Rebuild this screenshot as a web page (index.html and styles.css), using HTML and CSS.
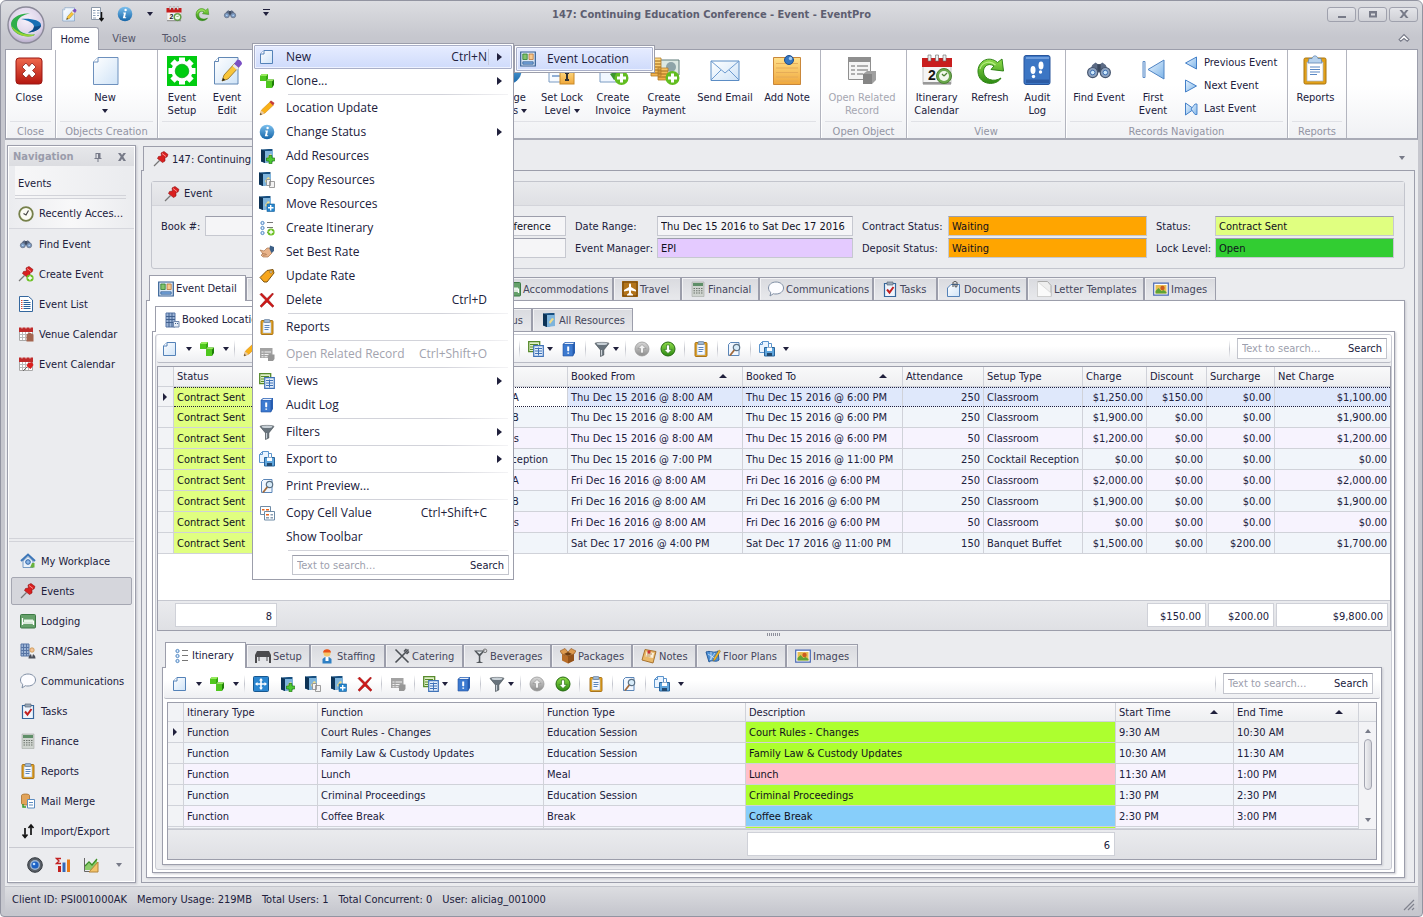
FILE: index.html
```html
<!DOCTYPE html>
<html lang="en">
<head>
<meta charset="utf-8">
<title>147: Continuing Education Conference - Event - EventPro</title>
<link rel="stylesheet" href="styles.css">
</head>
<body>
<svg class="sprite" aria-hidden="true">
<defs>
<linearGradient id="gPage" x1="0" y1="0" x2="1" y2="1"><stop offset="0" stop-color="#fff"/><stop offset="1" stop-color="#cfe3f7"/></linearGradient>
<linearGradient id="gBlue" x1="0" y1="0" x2="0" y2="1"><stop offset="0" stop-color="#7cc0ee"/><stop offset="1" stop-color="#1565a8"/></linearGradient>
<linearGradient id="gGreen" x1="0" y1="0" x2="0" y2="1"><stop offset="0" stop-color="#8fdc4a"/><stop offset="1" stop-color="#2c8a12"/></linearGradient>
<linearGradient id="gRed" x1="0" y1="0" x2="0" y2="1"><stop offset="0" stop-color="#ef6a4e"/><stop offset="1" stop-color="#b4160f"/></linearGradient>
<linearGradient id="gGold" x1="0" y1="0" x2="0" y2="1"><stop offset="0" stop-color="#ffe08a"/><stop offset="1" stop-color="#f0a83c"/></linearGradient>
<linearGradient id="gTri" x1="0" y1="0" x2="1" y2="1"><stop offset="0" stop-color="#eaf5ff"/><stop offset="1" stop-color="#7db4e8"/></linearGradient>
<linearGradient id="gGray" x1="0" y1="0" x2="0" y2="1"><stop offset="0" stop-color="#d8d8d8"/><stop offset="1" stop-color="#8d8d8d"/></linearGradient>
<radialGradient id="gOrb" cx=".5" cy=".35" r=".65"><stop offset="0" stop-color="#f6f0fa"/><stop offset=".75" stop-color="#d9cfe6"/><stop offset="1" stop-color="#b5abc8"/></radialGradient>
</defs>
<symbol id="orb" viewBox="0 0 38 38"><circle cx="19" cy="19" r="18" fill="url(#gOrb)" stroke="#8b8a99" stroke-width="1.400"/><path d="M23 7.500C12 6.500 4 12.500 4 18c0 6 6 12 17 12.500 4 0 6-1 7-2-11 1-19-4-18-11C10.500 12 16 8.500 23 7.500z" fill="#2fae4b"/><path d="M4.500 20c2 6 8 10 16.500 10.500 4 0 6-1 7-2-8 1-17-1-23.500-8.500z" fill="#9ad236"/><path d="M14 13c9-1 20 1 20 6 0 4-6 7-13 7.500 4-1.500 6-3.500 6-6 0-3.500-6-6-13-7.500z" fill="#176fb4"/><path d="M27 20.500c0 2.500-2 4.500-6 6 7-.5 13-3.500 13-7.500-2 1-4 1.500-7 1.500z" fill="#0c4a86"/></symbol>
<symbol id="page" viewBox="0 0 16 16"><path d="M5 1.500h8.500v13h-12V5z" fill="url(#gPage)" stroke="#5482b8"/><path d="M1.500 5H5V1.500" fill="#fff" stroke="#5482b8"/></symbol>
<symbol id="cubes" viewBox="0 0 16 16"><path d="M1 3l2-2h6v5L7.500 8H1z" fill="#37a80f"/><path d="M1 3l2-2h6L7.500 3z" fill="#96ea5c"/><path d="M1 3h6v5H1z" fill="#4fc81e"/><path d="M7 8.500L9 6.500h6v5.500l-2 3H7z" fill="#1f7d08"/><path d="M7 8.500l2-2h6l-2 2z" fill="#96ea5c"/><path d="M7 8.500h6V15H7z" fill="#4fc81e"/></symbol>
<symbol id="pencil" viewBox="0 0 16 16"><path d="M1 15l1.500-5L11 2l3.500 3L6 13z" fill="#f9b117" stroke="#d98a10" stroke-width=".6"/><path d="M10.500 2L12 .5 15.500 3 14 5.500z" fill="#c43c3c"/><path d="M1 15l1.300-4.500 3.200 2.700z" fill="#e8c9a0"/><path d="M1 15l.5-2 1.500 1.300z" fill="#333"/></symbol>
<symbol id="info" viewBox="0 0 16 16"><circle cx="8" cy="8" r="7.300" fill="url(#gBlue)"/><circle cx="8.600" cy="4" r="1.200" fill="#fff"/><path d="M6.300 6.500H9L8 11.300h1.300l-.3.900H5.800L7 7.400h-.9z" fill="#fff"/></symbol>
<symbol id="book" viewBox="0 0 16 16"><path d="M2 1.500l8-.5h3.500v12L6 15l-4-1.500z" fill="#174f80"/><path d="M6 3h8v11l-8 1z" fill="#7eb4dc"/><path d="M2 1.500L6 3v12l-4-1.700z" fill="#0d3356"/><path d="M8 10l3-4 2 1-4 5z" fill="#f0dd8a"/></symbol>
<symbol id="resadd" viewBox="0 0 16 16"><use href="#book"/><path d="M10 7.500h3V10h2.700v3H13v2.700h-3V13H7.500v-3H10z" fill="#4cc832" stroke="#237a15" stroke-width=".7"/></symbol>
<symbol id="rescopy" viewBox="0 0 16 16"><use href="#book" x="-2" y="-1"/><path d="M7.500 7.500h4v6h-4zM10.500 9.500h5v6h-5z" fill="#f3f3f3" stroke="#888" stroke-width=".8"/></symbol>
<symbol id="resmove" viewBox="0 0 16 16"><use href="#book" x="-2" y="-1"/><rect x="8" y="8" width="7.500" height="7.500" fill="#2486cf" stroke="#155a94" stroke-width=".6"/><path d="M11.700 9v5.500M9 11.700h5.500" stroke="#fff" stroke-width="1.400"/></symbol>
<symbol id="itin" viewBox="0 0 16 16"><g fill="#dcecff" stroke="#4f86c0"><circle cx="3.500" cy="3" r="1.600"/><circle cx="3.500" cy="8" r="1.600"/><circle cx="3.500" cy="13" r="1.600"/></g><path d="M8 2.500h6M8 7.500h6M8 12.500h6" stroke="#777"/></symbol>
<symbol id="itinadd" viewBox="0 0 16 16"><use href="#itin"/><circle cx="12" cy="12" r="3.600" fill="#6cc022"/><path d="M12 9.800v4.400M9.800 12h4.400" stroke="#fff" stroke-width="1.300"/></symbol>
<symbol id="hand" viewBox="0 0 16 16"><path d="M1 6l4 1 3-3h4l1 5-4 4H4L2 11l2-1z" fill="#e9b48b" stroke="#a9744e" stroke-width=".7"/><path d="M3 9.500l4 .5M4 11.500l4-1" stroke="#a9744e" stroke-width=".7"/><path d="M11 1.500l4 1.500v4l-2.500 2-2-4z" fill="#3c5f86"/></symbol>
<symbol id="tag" viewBox="0 0 16 16"><path d="M1 9.500L8 2.500l6-1 1 3.500-7 9H5z" fill="#f7a61c" stroke="#7d5410"/><circle cx="12" cy="4" r="1.200" fill="#fff" stroke="#7d5410" stroke-width=".7"/></symbol>
<symbol id="cross" viewBox="0 0 16 16"><path d="M1 2.500L2.500 1 8 6.500 13.500 1l1 1L9.500 8l5.500 6-1.500 1.300L8 10l-5.500 5.300L1 14l5.500-6z" fill="#cf1717" stroke="#8c0f0f" stroke-width=".5"/></symbol>
<symbol id="clip" viewBox="0 0 16 16"><rect x="2" y="1.500" width="12" height="14" rx="1" fill="#e9a51d" stroke="#a06a11" stroke-width=".9"/><path d="M4 3.500h8V14H4z" fill="#f5f9ff" stroke="#8ba3c4" stroke-width=".5"/><path d="M5.500 6.500h5M5.500 8.500h5M5.500 10.500h4" stroke="#4a78b5" stroke-width=".9"/><rect x="5" y=".5" width="6" height="3" rx="1" fill="#9fb8d4" stroke="#5b7696" stroke-width=".6"/></symbol>
<symbol id="openrel" viewBox="0 0 16 16"><path d="M1 2h12.500v10H1z" fill="#a3a3a3"/><path d="M2.500 5.500h2v1h-2zM5.500 5.500h6.500v1H5.500zM2.500 8h2v1h-2zM5.500 8h4v1h-4zM2.500 10.300h2v1h-2zM5.500 10.300h3v1h-3z" fill="#f2f2f2"/><path d="M9 10l1.500-1.500h5V13L14 15H9z" fill="#969696"/></symbol>
<symbol id="views" viewBox="0 0 16 16"><path d="M.7.700h11v10H.7z" fill="#dff0c8" stroke="#578a2c" stroke-width="1.300"/><path d="M2 3.500h8M2 6h3M2 8.500h3" stroke="#578a2c"/><path d="M5.700 4.700h9.600v10.600H5.700z" fill="#e3eefb" stroke="#3f72b8" stroke-width="1.200"/><path d="M7 7.500h7M7 10h7M7 12.500h7M10.500 6.500v8" stroke="#3f72b8"/></symbol>
<symbol id="log" viewBox="0 0 16 16"><path d="M2 3l2-2h10v11l-2 3H2z" fill="#2860b4"/><path d="M2 3h10v12H2z" fill="#3c7ad0" stroke="#2453a0" stroke-width=".6"/><path d="M3 3l1.500-1.300H13L12 3z" fill="#e8effa"/><path d="M6.200 5.500h2v4.200l-1 .8-1-.8zM6.400 11.500h1.700v1.300H6.400z" fill="#fff"/></symbol>
<symbol id="funnel" viewBox="0 0 16 16"><path d="M1 2.500C1 1 15 1 15 2.500L9.800 9v5L6.500 15.500V9z" fill="#68737c" stroke="#3c454c" stroke-width=".6"/><ellipse cx="8" cy="2.800" rx="5.500" ry="1.200" fill="#c8d0d6"/><path d="M7.600 9v5.500" stroke="#d5dbe0"/></symbol>
<symbol id="export" viewBox="0 0 16 16"><path d="M3.500.500h6v11h-9v-8z" fill="#eaf4ff" stroke="#5c94cc"/><path d="M.5 3.500h3v-3M9.500 2.500h3v4" fill="none" stroke="#5c94cc"/><path d="M5.500 6.500h10v8.500h-10z" fill="#5fa5dc" stroke="#28649c"/><path d="M8 6.500h5V10H8z" fill="#fff"/><path d="M8 12h5v3H8z" fill="#234a70"/></symbol>
<symbol id="preview" viewBox="0 0 16 16"><path d="M4.500 1.500h8.500v13H2.500v-11z" fill="#f1f7ff" stroke="#5b86b8"/><circle cx="10.500" cy="6.500" r="3.200" fill="#d8ecfa" stroke="#5c7184" stroke-width="1.200"/><path d="M8.300 9L4 14.500" stroke="#a36b3c" stroke-width="1.800"/></symbol>
<symbol id="copycell" viewBox="0 0 16 16"><path d="M1.500 1.500h10v8h-10z" fill="#fff" stroke="#6e8ba6"/><path d="M3 4h2.500v1.500H3zM7 4h3v1.500H7z" fill="#e8641b"/><path d="M5.500 6.500h10v8.500h-10z" fill="#fff" stroke="#6e8ba6"/><path d="M7 9h3v1.500H7z" fill="#e8641b"/><path d="M11.500 9h2.500v1.500h-2.500zM7 12h3v1.500H7zM11.500 12h2.500v1.500h-2.500z" fill="#8a9eb2"/></symbol>
<symbol id="evloc" viewBox="0 0 16 16"><path d="M.7 1h14.600v14H.7z" fill="#dce9f7" stroke="#345f94" stroke-width="1.200"/><path d="M2.800 3h4.400v5.500H2.800z" fill="#83c36c" stroke="#2d7c2c" stroke-width=".8"/><path d="M9 3h4.200v5.500H9z" fill="#f8c98c" stroke="#b9743a" stroke-width=".8"/><path d="M2.800 10.800h10.400v2.400H2.800z" fill="#7aa9e0" stroke="#345f94" stroke-width=".8"/></symbol>
<symbol id="pagepen" viewBox="0 0 32 32"><path d="M7.500 3.500H27v26.500H3.500V7.500z" fill="url(#gPage)" stroke="#6288b5"/><path d="M3.500 7.500h4v-4" fill="#fff" stroke="#6288b5"/><path d="M11 27l2-6 11-12 4 4-11 12z" fill="#f8c53a" stroke="#8c6a20" stroke-width=".8"/><path d="M23 10l4.500 4L31 10c0-3-3-5-5-4z" fill="#7a4fc4"/><path d="M21.500 12l1.800-2 4.500 4-1.800 2z" fill="#e6e6ee"/><path d="M11 27l1-3 2.300 2z" fill="#222"/></symbol>
<symbol id="pagelist" viewBox="0 0 16 16"><path d="M2.500 1.500h9v12h-9z" fill="#fff" stroke="#8c98a8"/><path d="M4 4.500h2.500M8 4.500h2.500M4 7h2.500M8 7h2.500M4 9.500h2.500M8 9.500h2M4 12h3" stroke="#8da0b8"/><path d="M12.500 6v8M10.500 12l2 2.500 2-2.500" fill="none" stroke="#111" stroke-width="1.500"/></symbol>
<symbol id="calbig" viewBox="0 0 32 32"><path d="M2 6h28v24H2z" fill="#f4f4f4" stroke="#c5c5c5"/><path d="M1 4h30v9H1z" fill="#c81e1e"/><path d="M7 1h3v6H7zM14.500 1h3v6h-3zM22 1h3v6h-3z" fill="#eee" stroke="#666" stroke-width=".6"/><path d="M2 28h28v2.500H2z" fill="#999"/><text x="7" y="25.500" font-family="Liberation Sans, sans-serif" font-size="14" font-weight="700" fill="#151515">2</text><circle cx="23" cy="22" r="7.500" fill="#6aa84c" stroke="#4b8233"/><circle cx="23" cy="22" r="5" fill="#f1f8ec"/><path d="M23 22l3-3M23 22l-2-2" stroke="#4b8233" stroke-width="1.300"/></symbol>
<symbol id="refresh" viewBox="0 0 32 32"><path d="M27 24c-4 8-22 8-23-6C3.500 7 15 1 23.500 8.500L28 5l1.500 12-12.500-1.500 3-3.500C14 8 9 13 9.500 18c.5 7 10 11 17.500 6z" fill="url(#gGreen)" stroke="#2f8416"/><path d="M6 15c2-7 10-9 15.500-4" fill="none" stroke="#b8ee86" stroke-width="1.200"/></symbol>
<symbol id="binoc" viewBox="-3 -3 38 38"><path d="M8 10l4-3 4 3 4-3 4 3 4 9H4z" fill="#5c6b85"/><path d="M14 9h4v9h-4z" fill="#3a475c"/><circle cx="8.500" cy="19" r="6" fill="#8ea3c0" stroke="#46556e" stroke-width="1.400"/><circle cx="23.500" cy="19" r="6" fill="#8ea3c0" stroke="#46556e" stroke-width="1.400"/><circle cx="8.500" cy="19" r="2.700" fill="#cfeafc" stroke="#2b5fa8"/><circle cx="23.500" cy="19" r="2.700" fill="#cfeafc" stroke="#2b5fa8"/></symbol>
<symbol id="closebig" viewBox="0 0 32 32"><rect x="3" y="4" width="26" height="26" rx="3" fill="url(#gRed)" stroke="#9a1712"/><path d="M9 13l4-4 3 3.500L19 9l4 4-3.500 3.500L23 20l-4 4-3-3.500-3 3.500-4-4 3.500-3.500z" fill="#fff" stroke="#7c120d" stroke-width=".7"/></symbol>
<symbol id="pagebig" viewBox="0 0 32 32"><path d="M9 3.500h20v27H4.500V8z" fill="url(#gPage)" stroke="#6d90bd"/><path d="M4.500 8H9V3.500" fill="#fff" stroke="#6d90bd"/></symbol>
<symbol id="gear" viewBox="0 0 32 32"><path d="M1 2h30v30H1z" fill="#00cc10"/><g fill="#fff"><circle cx="16" cy="17" r="10.500"/><path d="M13 3.500h6v5h-6zM13 25.500h6v5h-6zM2.500 14h5v6h-5zM24.500 14h5v6h-5z"/><path d="M13 3.500h6v5h-6zM13 25.500h6v5h-6zM2.500 14h5v6h-5zM24.500 14h5v6h-5z" transform="rotate(45 16 17)"/></g><circle cx="16" cy="17" r="6.800" fill="#00cc10" stroke="#0a9a14" stroke-width=".7"/></symbol>
<symbol id="lock" viewBox="0 0 32 32"><path d="M3 3h22v25H3z" fill="#f6faff" stroke="#7b9bc2"/><path d="M6 10h12M6 14h9M6 18h9M6 22h8" stroke="#6f95c6" stroke-width="1.500"/><path d="M18 15v-3c0-5 8-5 8 0v3" fill="none" stroke="#999" stroke-width="2"/><rect x="14" y="15" width="14" height="15" fill="url(#gGold)" stroke="#c98a28"/><path d="M19 18h4v2h-1v5h1v2h-4v-2h1v-5h-1z" fill="#333"/></symbol>
<symbol id="invoice" viewBox="0 0 32 32"><path d="M3 3h22v25H3z" fill="#f1f7ff" stroke="#7b9bc2"/><path d="M13 20l8-4 2 7-6 3z" fill="#3e9430"/><circle cx="24.500" cy="24" r="7" fill="#62bd20"/><path d="M24.500 19.500v9M20 24h9" stroke="#fff" stroke-width="3"/></symbol>
<symbol id="payment" viewBox="0 0 32 32"><path d="M12 6h19v15H12z" fill="#dce8e2" stroke="#5e7a78"/><circle cx="23" cy="13" r="5" fill="#8ea4a8"/><g fill="url(#gGold)" stroke="#b37b2a" stroke-width=".8"><path d="M3 4h10v3H3zM3 7h10v3H3zM3 10h10v3H3zM3 13h10v3H3zM3 16h10v3H3zM3 19h10v3H3zM10 14h10v3H10zM10 17h10v3H10zM10 20h10v3H10zM10 23h10v3H10z"/></g><circle cx="24.500" cy="24" r="7" fill="#62bd20"/><path d="M24.500 19.500v9M20 24h9" stroke="#fff" stroke-width="3"/></symbol>
<symbol id="mail" viewBox="0 0 32 32"><path d="M2 7h28v19.500H2z" fill="url(#gPage)" stroke="#5b8cc4"/><path d="M2 7l14 12L30 7M2 26l10-10M30 26L20 16" fill="none" stroke="#6d9bd0"/></symbol>
<symbol id="note" viewBox="0 0 32 32"><path d="M2.500 3.500h27v27h-27z" fill="url(#gGold)" stroke="#c9873a"/><path d="M5 9.500h22M5 14h22M5 18.500h22M5 23h22M5 27h22" stroke="#e3a957" stroke-width=".9"/><circle cx="18" cy="6" r="4.500" fill="#3576c0" stroke="#1d4d8c"/><circle cx="19.500" cy="4.500" r="1.700" fill="#9fc8ef"/></symbol>
<symbol id="openrelbig" viewBox="0 0 32 32"><path d="M2.500 3.500h22v22h-22z" fill="#f4f4f4" stroke="#8f8f8f"/><path d="M2 3h23v5H2z" fill="#8f8f8f"/><path d="M5 12h4M11 12h11M5 16h4M11 16h11M5 20h4M11 20h6" stroke="#969696" stroke-width="1.600"/><path d="M17 20l4-3h9v9l-4 4h-9z" fill="#a0a0a0"/><path d="M17 20h9v10h-9z" fill="#858585"/></symbol>
<symbol id="audit" viewBox="0 0 32 32"><rect x="3" y="1.500" width="26" height="29" rx="2" fill="#3c76c4" stroke="#28559c"/><path d="M5 25.500h23V29H5z" fill="#2c5ba4"/><path d="M5 4h23" stroke="#7fabe4" stroke-width="1.500"/><g fill="#fff"><ellipse cx="12" cy="16" rx="2.500" ry="4"/><ellipse cx="12.500" cy="22.500" rx="1.700" ry="1.800"/><ellipse cx="20" cy="11.500" rx="2.500" ry="4"/><ellipse cx="19.500" cy="18" rx="1.700" ry="1.800"/></g></symbol>
<symbol id="firstbig" viewBox="0 0 32 32"><path d="M6 7.500h2v16H6z" fill="#dbe9f8" stroke="#5f8ec8"/><path d="M27 6v19L11 15.500z" fill="url(#gTri)" stroke="#4f84c4"/></symbol>
<symbol id="prev" viewBox="0 0 16 16"><path d="M13.500 2v12L2.500 8z" fill="url(#gTri)" stroke="#4480c8"/></symbol>
<symbol id="next" viewBox="0 0 16 16"><path d="M2.500 2v12l11-6z" fill="url(#gTri)" stroke="#4480c8"/></symbol>
<symbol id="last" viewBox="0 0 16 16"><path d="M2.500 2v12L11 8z" fill="url(#gTri)" stroke="#4480c8"/><path d="M12 3h2v10.500h-2L8 8z" fill="url(#gTri)" stroke="#4480c8" stroke-width=".9"/></symbol>
<symbol id="clipbig" viewBox="0 0 32 32"><rect x="5" y="4" width="22" height="26" rx="1.500" fill="#e2a019" stroke="#a87410"/><path d="M8 8h16v19H8z" fill="#fff" stroke="#a6b6cc" stroke-width=".7"/><path d="M11 13h10M11 15.500h10M11 18h10M11 20.500h7" stroke="#5a88c4" stroke-width="1.100"/><path d="M10 4.500h3C14 1 18 1 19 4.500h3l1 4.500H9z" fill="#b6d2ee" stroke="#5c81ad" stroke-width=".8"/></symbol>
<symbol id="pin" viewBox="0 0 16 16"><path d="M1 15l5.500-5.500" stroke="#777" stroke-width="1.300"/><path d="M8 2l3-1.500 4 3-1 2.500-2 .5 0 3.500-2.500 1.500-5-4 1-2 3-.5z" fill="#d91f1f" stroke="#8e1010" stroke-width=".6"/><path d="M9 2.500l4 3" stroke="#ff8d8d"/></symbol>
<symbol id="pinadd" viewBox="0 0 16 16"><use href="#pin"/><circle cx="12" cy="12" r="3.600" fill="#6cc022"/><path d="M12 9.800v4.400M9.800 12h4.400" stroke="#fff" stroke-width="1.300"/></symbol>
<symbol id="clock" viewBox="0 0 16 16"><circle cx="8" cy="8" r="6.800" fill="#fbfbf3" stroke="#76804a" stroke-width="1.800"/><path d="M5.500 7.500L8 9l2.500-4.500" fill="none" stroke="#444" stroke-width="1.200"/></symbol>
<symbol id="list" viewBox="0 0 16 16"><path d="M1.500.500h9l4 3.500v11.500h-13z" fill="#fff" stroke="#34679e"/><path d="M3 4.500h1.500M3 6.500h1.500M3 8.500h1.500M3 10.500h1.500M3 12.500h1.500" stroke="#d43"/><path d="M5.500 4.500h5M5.500 6.500h7M5.500 8.500h7M5.500 10.500h7M5.500 12.500h7" stroke="#2a5f9c"/></symbol>
<symbol id="calred" viewBox="0 0 16 16"><path d="M1.500 3.500h13v11h-13z" fill="#fff" stroke="#aaa"/><path d="M1 1.500h14V6H1z" fill="#bf2a2a"/><path d="M3.500.500h1v2h-1zM7.500.500h1v2h-1zM11.500.500h1v2h-1z" fill="#eee"/><path d="M2 8.500h12M2 11.500h12M4.500 6v8M7.500 6v8M10.500 6v8" stroke="#bbb"/></symbol>
<symbol id="calven" viewBox="0 0 16 16"><use href="#calred"/><path d="M8.500 8.500l3-2 4 2v7h-7z" fill="#a3644f"/></symbol>
<symbol id="calev" viewBox="0 0 16 16"><use href="#calred"/><path d="M5 15l4-4" stroke="#666"/><path d="M10 7l4-1 1.500 3-3 4-4-3z" fill="#d91f1f"/></symbol>
<symbol id="home" viewBox="0 0 16 16"><path d="M1 8l7-6.500L15 8" fill="none" stroke="#3c76b8" stroke-width="2"/><path d="M3 8l5-4.500L13 8v6.500H3z" fill="#eaf2fb" stroke="#5a86b8" stroke-width=".8"/><circle cx="8" cy="9" r="2.300" fill="#8db8e8" stroke="#2f62a4"/><path d="M12 10h2.500v4.500H10z" fill="#69b23c"/></symbol>
<symbol id="bed" viewBox="0 0 16 16"><rect x=".5" y="1.500" width="15" height="13.500" rx="1" fill="#65a06a" stroke="#3d7a45"/><path d="M2.500 5v7M2.500 10h11M13.500 7.500V12" stroke="#fff" stroke-width="1.300"/><path d="M4 6.500h9v2.500H4z" fill="#e8f5e8"/></symbol>
<symbol id="building" viewBox="0 0 16 16"><path d="M2 1h9v14H2z" fill="#9cb4d6" stroke="#5674a4"/><path d="M2 4.500h9M2 7.500h9M2 10.500h9M5 1v14M8 1v14" stroke="#41608f"/><path d="M9.500 9.500h5.500V15H9.500z" fill="#e5edf7" stroke="#7188ac"/><path d="M11 11.500h1M13 11.500h1" stroke="#41608f"/></symbol>
<symbol id="crm" viewBox="0 0 16 16"><path d="M1 1h8v12H1z" fill="#9cb4d6" stroke="#5674a4"/><path d="M1 4.500h8M1 7.500h8M1 10.500h8M3.500 1v12M6.500 1v12" stroke="#5674a4"/><circle cx="12" cy="7" r="2.200" fill="#f2c49a" stroke="#c68a3a" stroke-width=".7"/><path d="M8.500 15.500c0-6 7-6 7 0z" fill="#4a4f5a"/><path d="M11 10.500h2l-1 4z" fill="#fff"/></symbol>
<symbol id="bubble" viewBox="0 0 16 16"><path d="M8 1c4.500 0 7.500 2.800 7.500 6S12.500 13 8 13c-1 0-2 0-2.600-.3L2 15l.8-3.500C1.500 10.500.500 9 .5 7 .5 3.800 3.500 1 8 1z" fill="#fcfcff" stroke="#7f8ea4"/></symbol>
<symbol id="tasks" viewBox="0 0 16 16"><path d="M2.500 2.500h11v13h-11z" fill="#eef5fd" stroke="#35669c" stroke-width="1.200"/><path d="M5 1h6v3H5z" fill="#9aa9b8" stroke="#5d6c7c" stroke-width=".7"/><path d="M5 8.500l2.500 3L11.500 6" fill="none" stroke="#c22020" stroke-width="2"/></symbol>
<symbol id="calc" viewBox="0 0 16 16"><path d="M2 1h12v14.500H2z" fill="#cfd4cf" stroke="#a5aaa5" stroke-width=".6"/><path d="M3 2h10v3H3z" fill="#5f8f68"/><path d="M3.500 7h1.500v1H3.500zM6 7h1.500v1H6zM8.500 7H10v1H8.500zM11 7h1.500v1H11zM3.500 9.300h1.500v1H3.500zM6 9.300h1.500v1H6zM8.500 9.300H10v1H8.500zM11 9.300h1.500v1H11zM3.500 11.600h1.500v1H3.500zM6 11.600h1.500v1H6zM8.500 11.600H10v1H8.500zM11 11.600h1.500v1H11z" fill="#6d736d"/></symbol>
<symbol id="merge" viewBox="0 0 16 16"><path d="M1.500 2.500c0-2 8-2 8 0v8c0 2-8 2-8 0z" fill="#e2a45a" stroke="#a56d2c" stroke-width=".8"/><path d="M7.500 6.500h7v8.500h-7z" fill="#fff" stroke="#5d8cc0"/><path d="M9 9.500h4M9 12h4" stroke="#5d8cc0"/><path d="M3 11v3h3" fill="none" stroke="#3b9a2c" stroke-width="1.500"/></symbol>
<symbol id="updown" viewBox="0 0 16 16"><path d="M5 5v9M2.500 11.500L5 14.500l2.500-3M11 12V2M8.500 5L11 2l2.500 3" fill="none" stroke="#151515" stroke-width="1.700"/></symbol>
<symbol id="camera" viewBox="0 0 16 16"><circle cx="8" cy="8" r="7.300" fill="#5a6068" stroke="#33383e"/><circle cx="8" cy="8" r="5" fill="#9ab3d0"/><circle cx="8" cy="8" r="3.600" fill="#1d62c4"/><circle cx="7" cy="7" r="1.300" fill="#bfe0ff"/></symbol>
<symbol id="sigma" viewBox="0 0 16 16"><path d="M6 1.500H1.500L4 4 1.500 6.500H6" fill="none" stroke="#c32020" stroke-width="1.300"/><path d="M3 9h3v6H3z" fill="#c32020"/><path d="M7.500 5.500h3V15h-3z" fill="#3468b8"/><path d="M12 2.500h3V15h-3z" fill="#e77b1a"/></symbol>
<symbol id="chart" viewBox="0 0 16 16"><path d="M1.500 1v13.500H9" fill="none" stroke="#666"/><path d="M2 13V9l4-3 3 2 5-6v11z" fill="#8ccc6a"/><path d="M2 9l4-4 3 3 5-6" fill="none" stroke="#3b8f25" stroke-width="1.300"/><path d="M15 5v10H6z" fill="#f3c36a" stroke="#b3843a"/></symbol>
<symbol id="plane" viewBox="0 0 16 16"><path d="M0 0h16v16H0z" fill="#b37419"/><path d="M1 1h14v14H1z" fill="none" stroke="#6d430b"/><path d="M8 2l1 1.500V6l5 3v1.500L9 9.500V12l2 1.500v1H5v-1L7 12V9.500l-5 1V9l5-3V3.500z" fill="#fff"/></symbol>
<symbol id="docclip" viewBox="0 0 16 16"><path d="M5 3.500h8.500v12h-12V7z" fill="url(#gPage)" stroke="#5482b8"/><path d="M7 6V2c0-2 4-2 4 0v3c0 1.500-2 1.500-2 0V2.500" fill="none" stroke="#333" stroke-width=".9"/></symbol>
<symbol id="letter" viewBox="0 0 16 16"><path d="M1.500.500h10l3.500 4v11h-13.500z" fill="#eee" stroke="#aaa"/><path d="M1.500.500L15 12v3.500H1.500z" fill="#fafafa" stroke="#ccc" stroke-width=".6"/></symbol>
<symbol id="image" viewBox="0 0 16 16"><path d="M.7 2.200h14.600v12H.7z" fill="#fff" stroke="#4a69b4" stroke-width="1.200"/><path d="M2.500 4h11v8.500h-11z" fill="#e8bd52"/><path d="M2.500 12.500V10l3-3 3 3 2-1 3 2v1.500z" fill="#5fa334"/><circle cx="9.500" cy="7" r="2.200" fill="#cc5c1e"/></symbol>
<symbol id="table" viewBox="0 0 16 16"><path d="M0 7l2-4h12l2 4v8h-2V9h-1.500v4h-1V9h-7v4h-1V9H2v6H0z" fill="#4b4b4e"/></symbol>
<symbol id="person" viewBox="0 0 16 16"><circle cx="8" cy="5" r="3.500" fill="#f5c66a"/><path d="M4 4.500C4 0 12 0 12 4.500z" fill="#e8521c"/><path d="M3.500 15.500V11l2.500-2h4l2.500 2v4.500z" fill="#2f80c4"/><path d="M6.500 9h3v4h-3z" fill="#fff"/></symbol>
<symbol id="fork" viewBox="0 0 16 16"><path d="M1.500 1.500l13 13M14.500 1.500l-13 13M10 3.500l2.500-2.500M12.500 6L15 3.500" stroke="#4d5156" stroke-width="1.600"/></symbol>
<symbol id="glass" viewBox="0 0 16 16"><path d="M2 2.500h11L8.300 8v5.500l3 1.500h-7.500l3-1.500V8z" fill="#50555a"/><path d="M4.500 3.500h6L7.500 6z" fill="#dfe6ea"/><circle cx="13" cy="2.800" r="1.800" fill="none" stroke="#777"/></symbol>
<symbol id="box" viewBox="0 0 16 16"><path d="M2 6l6 2 6-2v6.500L8 15.500 2 12.500z" fill="#b86d28"/><path d="M8 8v7.500l6-3V6z" fill="#94521a"/><path d="M2 6L0 3l5-2.500L8 4l3-3.500L16 3l-2 3-6 2z" fill="#dc9a50" stroke="#8a4f1c" stroke-width=".6"/><path d="M8 4L4 6l4 1.800L12 6z" fill="#6e3c12"/></symbol>
<symbol id="notes" viewBox="0 0 16 16"><path d="M4 1.500l11 2-3 11.500L1 12z" fill="#e9b96a" stroke="#a87330"/><path d="M5.500 3.500l7.500 1.500-1 5-7.500-1.500z" fill="#faf0dc"/><path d="M6 6h5M5.500 8h4" stroke="#b58a4a"/><circle cx="8" cy="4" r="1.700" fill="#c33"/></symbol>
<symbol id="floor" viewBox="0 0 16 16"><path d="M1 4c4-2 8 2 12-1l1 9c-4 3-6-1-10 2z" fill="#4c8fd4" stroke="#285c9a"/><path d="M3 6l8 5M10 5l-5 7M6 4v8" stroke="#d6e9fb" stroke-width=".8"/><path d="M8 13l1-3 5-8 1.500 1-5 8.500z" fill="#f5bb2c" stroke="#8d6b1e" stroke-width=".5"/></symbol>
<symbol id="up" viewBox="0 0 16 16"><circle cx="8" cy="8" r="7" fill="url(#gGray)" stroke="#999" stroke-width=".8"/><path d="M8 3.500l4 4H9.500V12h-3V7.500H4z" fill="#f2f2f2" stroke="#888" stroke-width=".6"/></symbol>
<symbol id="down" viewBox="0 0 16 16"><circle cx="8" cy="8" r="7" fill="url(#gGreen)" stroke="#24690f"/><path d="M8 12.500l-4-4h2.500V4h3v4.500H12z" fill="#fff" stroke="#24690f" stroke-width=".6"/></symbol>
<symbol id="move" viewBox="0 0 16 16"><rect x=".5" y=".5" width="15" height="15" rx="1" fill="#2b86d0" stroke="#17578f"/><path d="M8 2l2 2.500H8.800v2.700h2.700V6L14 8l-2.500 2V8.800H8.800v2.700H10L8 14l-2-2.500h1.200V8.800H4.500V10L2 8l2.500-2v1.200h2.700V4.500H6z" fill="#fff"/></symbol>
</svg>

<div class="window">
<header class="titlebar">
  <button class="orb" aria-label="Application menu"><svg><use href="#orb"/></svg></button>
  <div class="quick">
    <button aria-label="Edit"><svg class="i"><use href="#pagepen"/></svg></button>
    <button aria-label="List"><svg class="i"><use href="#pagelist"/></svg></button>
    <button aria-label="Info"><svg class="i"><use href="#info"/></svg></button>
    <button class="quick-caret" aria-label="Info options"><span class="caret"></span></button>
    <button aria-label="Calendar"><svg class="i"><use href="#calbig"/></svg></button>
    <button aria-label="Refresh"><svg class="i"><use href="#refresh"/></svg></button>
    <button aria-label="Find"><svg class="i"><use href="#binoc"/></svg></button>
    <button class="quick-more" aria-label="Customize"><span class="caret"></span></button>
  </div>
  <h1>147: Continuing Education Conference - Event - EventPro</h1>
  <div class="winbtns">
    <button aria-label="Minimize"><svg viewBox="0 0 12 10"><path d="M2 7h8v2H2z"/></svg></button>
    <button aria-label="Maximize"><svg viewBox="0 0 12 10"><path d="M2 2h8v6.500H2zM4 4.500v2h4v-2z" fill-rule="evenodd"/></svg></button>
    <button aria-label="Close window"><svg viewBox="0 0 12 10"><path d="M1.500 1h2.500l2 2.500L8 1h2.500L7.300 5l3.200 4H8L6 6.500 4 9H1.500l3.200-4z"/></svg></button>
  </div>
</header>
<nav class="ribbon-tabs">
  <button class="on">Home</button><button>View</button><button>Tools</button>
  <button class="collapse" aria-label="Collapse ribbon"><svg viewBox="0 0 12 10"><path d="M1.500 6L6 1.500 10.500 6 9 7.500 6 5 3 7.500z" fill="#fff" stroke="#777a88"/></svg></button>
</nav>
<section class="ribbon">
  <div class="rgroup g-close"><div class="rbody"><button class="big"><svg><use href="#closebig"/></svg>Close</button></div><p>Close</p></div>
  <div class="rgroup g-objects"><div class="rbody"><button class="big"><svg><use href="#pagebig"/></svg>New<br><span class="caret"></span></button></div><p>Objects Creation</p></div>
  <div class="rgroup g-actions"><div class="rbody">
    <button class="big b44"><svg><use href="#gear"/></svg>Event<br>Setup</button>
    <button class="big b46"><svg><use href="#pagepen"/></svg>Event<br>Edit</button>
    <span class="spring"></span>
    <button class="big b60"><svg><use href="#info"/></svg>Change<br>Status <span class="caret"></span></button>
    <button class="big b50"><svg><use href="#lock"/></svg>Set Lock<br>Level <span class="caret"></span></button>
    <button class="big b52"><svg><use href="#invoice"/></svg>Create<br>Invoice</button>
    <button class="big b50"><svg><use href="#payment"/></svg>Create<br>Payment</button>
    <button class="big b72"><svg><use href="#mail"/></svg>Send Email</button>
    <button class="big b52"><svg><use href="#note"/></svg>Add Note</button>
  </div><p></p></div>
  <div class="rgroup g-open"><div class="rbody"><button class="big" disabled><svg><use href="#openrelbig"/></svg>Open Related<br>Record</button></div><p>Open Object</p></div>
  <div class="rgroup g-view"><div class="rbody">
    <button class="big b60"><svg><use href="#calbig"/></svg>Itinerary<br>Calendar</button>
    <button class="big b48"><svg><use href="#refresh"/></svg>Refresh</button>
    <button class="big b48"><svg><use href="#audit"/></svg>Audit<br>Log</button>
  </div><p>View</p></div>
  <div class="rgroup g-records"><div class="rbody">
    <button class="big b66"><svg><use href="#binoc"/></svg>Find Event</button>
    <button class="big b42"><svg><use href="#firstbig"/></svg>First<br>Event</button>
    <div class="smalls"><button><svg class="i"><use href="#prev"/></svg>Previous Event</button><button><svg class="i"><use href="#next"/></svg>Next Event</button><button><svg class="i"><use href="#last"/></svg>Last Event</button></div>
  </div><p>Records Navigation</p></div>
  <div class="rgroup g-reports"><div class="rbody"><button class="big"><svg><use href="#clipbig"/></svg>Reports</button></div><p>Reports</p></div>
</section>

<div class="work">
<aside class="nav">
  <div class="nav-head"><b>Navigation</b>
    <button aria-label="Pin panel"><svg viewBox="0 0 12 12"><path d="M3.500 2h5v5h1v1H6.500v3h-1V8h-3V7h1zm1 1v4H6V3z" fill="#777a88" fill-rule="evenodd"/></svg></button>
    <button aria-label="Close panel"><svg viewBox="0 0 12 12"><path d="M2 2h2.500L6 4l1.500-2H10L7.300 5.800 10 10H7.500L6 7.700 4.500 10H2l2.700-4.200z" fill="#777a88"/></svg></button></div>
  <h2>Events</h2>
  <div class="nav-links">
    <a href="#" class="lit"><svg class="i"><use href="#clock"/></svg>Recently Acces...</a>
    <a href="#"><svg class="i"><use href="#binoc"/></svg>Find Event</a>
    <a href="#"><svg class="i"><use href="#pinadd"/></svg>Create Event</a>
    <a href="#"><svg class="i"><use href="#list"/></svg>Event List</a>
    <a href="#"><svg class="i"><use href="#calven"/></svg>Venue Calendar</a>
    <a href="#"><svg class="i"><use href="#calev"/></svg>Event Calendar</a>
  </div>
  <div class="nav-groups">
    <a href="#"><svg class="i"><use href="#home"/></svg>My Workplace</a>
    <a href="#" class="on"><svg class="i"><use href="#pin"/></svg>Events</a>
    <a href="#"><svg class="i"><use href="#bed"/></svg>Lodging</a>
    <a href="#"><svg class="i"><use href="#crm"/></svg>CRM/Sales</a>
    <a href="#"><svg class="i"><use href="#bubble"/></svg>Communications</a>
    <a href="#"><svg class="i"><use href="#tasks"/></svg>Tasks</a>
    <a href="#"><svg class="i"><use href="#calc"/></svg>Finance</a>
    <a href="#"><svg class="i"><use href="#clip"/></svg>Reports</a>
    <a href="#"><svg class="i"><use href="#merge"/></svg>Mail Merge</a>
    <a href="#"><svg class="i"><use href="#updown"/></svg>Import/Export</a>
  </div>
  <div class="nav-foot">
    <button aria-label="Camera"><svg class="i"><use href="#camera"/></svg></button>
    <button aria-label="Totals"><svg class="i"><use href="#sigma"/></svg></button>
    <button aria-label="Charts"><svg class="i"><use href="#chart"/></svg></button>
    <button aria-label="More"><span class="caret gray"></span></button>
  </div>
</aside>

<main>
<div class="doc-tabs"><button class="on"><svg class="i"><use href="#pin"/></svg>147: Continuing Education Conference</button><span class="caret gray"></span></div>
<div class="doc">
  <section class="group">
    <h3><svg class="i"><use href="#pin"/></svg>Event</h3>
    <div class="fields">
      <label for="f1">Book #:</label><input id="f1" readonly>
      <input id="f2" class="name" aria-label="Event name" readonly value="Continuing Education Conference">
      <label for="f3">Date Range:</label><input id="f3" readonly value="Thu Dec 15 2016 to Sat Dec 17 2016">
      <label for="f4">Contract Status:</label><input id="f4" class="orange" readonly value="Waiting">
      <label for="f5">Status:</label><input id="f5" class="lime" readonly value="Contract Sent">
      <input id="f6" class="name" aria-label="Account" readonly>
      <label for="f7">Event Manager:</label><input id="f7" class="violet" readonly value="EPI">
      <label for="f8">Deposit Status:</label><input id="f8" class="orange" readonly value="Waiting">
      <label for="f9">Lock Level:</label><input id="f9" class="green" readonly value="Open">
    </div>
  </section>

  <div class="tabs" role="tablist">
    <button role="tab" class="on w97"><svg class="i"><use href="#evloc"/></svg>Event Detail</button>
    <button role="tab" class="w250" aria-label="More details"></button>
    <button role="tab" class="w117"><svg class="i"><use href="#bed"/></svg>Accommodations</button>
    <button role="tab" class="w68"><svg class="i"><use href="#plane"/></svg>Travel</button>
    <button role="tab" class="w78"><svg class="i"><use href="#calc"/></svg>Financial</button>
    <button role="tab" class="w114"><svg class="i"><use href="#bubble"/></svg>Communications</button>
    <button role="tab" class="w64"><svg class="i"><use href="#tasks"/></svg>Tasks</button>
    <button role="tab" class="w90"><svg class="i"><use href="#docclip"/></svg>Documents</button>
    <button role="tab" class="w117"><svg class="i"><use href="#letter"/></svg>Letter Templates</button>
    <button role="tab" class="w72"><svg class="i"><use href="#image"/></svg>Images</button>
  </div>
  <div class="panel p1">
    <div class="tabs" role="tablist">
      <button role="tab" class="on w117"><svg class="i"><use href="#building"/></svg>Booked Locations</button>
      <button role="tab" class="w260 end">Venue Status</button>
      <button role="tab" class="w101"><svg class="i"><use href="#book"/></svg>All Resources</button>
    </div>
    <div class="panel p2"><div class="frame">
      <div class="toolbar">
        <button aria-label="New"><svg class="i"><use href="#page"/></svg></button><button class="drop" aria-label="New options"><span class="caret"></span></button>
        <button aria-label="Clone"><svg class="i"><use href="#cubes"/></svg></button><button class="drop" aria-label="Clone options"><span class="caret"></span></button>
        <hr><div class="run"><button aria-label="Location update"><svg class="i"><use href="#pencil"/></svg></button></div>
        <hr><button aria-label="Views"><svg class="i"><use href="#views"/></svg></button><button class="drop slim" aria-label="View options"><span class="caret"></span></button>
        <button aria-label="Audit log"><svg class="i"><use href="#log"/></svg></button>
        <hr><button aria-label="Filters"><svg class="i"><use href="#funnel"/></svg></button><button class="drop slim" aria-label="Filter options"><span class="caret"></span></button>
        <hr><button aria-label="Up"><svg class="i"><use href="#up"/></svg></button><button aria-label="Down"><svg class="i"><use href="#down"/></svg></button>
        <hr><button aria-label="Reports"><svg class="i"><use href="#clip"/></svg></button>
        <hr><button aria-label="Print preview"><svg class="i"><use href="#preview"/></svg></button>
        <hr><button aria-label="Export"><svg class="i"><use href="#export"/></svg></button><button class="drop" aria-label="Export options"><span class="caret"></span></button>
        <span class="spring"></span><hr>
        <div class="search"><input placeholder="Text to search..." aria-label="Text to search"><button>Search</button></div>
      </div>
      <div class="grid g1">
        <div class="rows"><table>
          <colgroup><col class="c-ind"><col class="c-stat"><col class="c-room"><col class="c-name"><col class="c-from"><col class="c-to"><col class="c-att"><col class="c-setup"><col class="c-chg"><col class="c-disc"><col class="c-sur"><col></colgroup>
          <thead><tr><th></th><th>Status</th><th></th><th></th><th>Booked From<i></i></th><th>Booked To<i></i></th><th>Attendance</th><th>Setup Type</th><th>Charge</th><th>Discount</th><th>Surcharge</th><th>Net Charge</th></tr></thead>
          <tbody>
          <tr class="focus"><td><span class="tri"></span></td><td>Contract Sent</td><td></td><td>Auditorium A</td><td>Thu Dec 15 2016 @ 8:00 AM</td><td>Thu Dec 15 2016 @ 6:00 PM</td><td>250</td><td>Classroom</td><td>$1,250.00</td><td>$150.00</td><td>$0.00</td><td>$1,100.00</td></tr>
          <tr><td></td><td>Contract Sent</td><td></td><td>Auditorium B</td><td>Thu Dec 15 2016 @ 8:00 AM</td><td>Thu Dec 15 2016 @ 6:00 PM</td><td>250</td><td>Classroom</td><td>$1,900.00</td><td>$0.00</td><td>$0.00</td><td>$1,900.00</td></tr>
          <tr><td></td><td>Contract Sent</td><td></td><td>Study Rooms</td><td>Thu Dec 15 2016 @ 8:00 AM</td><td>Thu Dec 15 2016 @ 6:00 PM</td><td>50</td><td>Classroom</td><td>$1,200.00</td><td>$0.00</td><td>$0.00</td><td>$1,200.00</td></tr>
          <tr><td></td><td>Contract Sent</td><td></td><td>Opening Reception</td><td>Thu Dec 15 2016 @ 7:00 PM</td><td>Thu Dec 15 2016 @ 11:00 PM</td><td>250</td><td>Cocktail Reception</td><td>$0.00</td><td>$0.00</td><td>$0.00</td><td>$0.00</td></tr>
          <tr><td></td><td>Contract Sent</td><td></td><td>Auditorium A</td><td>Fri Dec 16 2016 @ 8:00 AM</td><td>Fri Dec 16 2016 @ 6:00 PM</td><td>250</td><td>Classroom</td><td>$2,000.00</td><td>$0.00</td><td>$0.00</td><td>$2,000.00</td></tr>
          <tr><td></td><td>Contract Sent</td><td></td><td>Auditorium B</td><td>Fri Dec 16 2016 @ 8:00 AM</td><td>Fri Dec 16 2016 @ 6:00 PM</td><td>250</td><td>Classroom</td><td>$1,900.00</td><td>$0.00</td><td>$0.00</td><td>$1,900.00</td></tr>
          <tr><td></td><td>Contract Sent</td><td></td><td>Study Rooms</td><td>Fri Dec 16 2016 @ 8:00 AM</td><td>Fri Dec 16 2016 @ 6:00 PM</td><td>50</td><td>Classroom</td><td>$0.00</td><td>$0.00</td><td>$0.00</td><td>$0.00</td></tr>
          <tr><td></td><td>Contract Sent</td><td></td><td></td><td>Sat Dec 17 2016 @ 4:00 PM</td><td>Sat Dec 17 2016 @ 11:00 PM</td><td>150</td><td>Banquet Buffet</td><td>$1,500.00</td><td>$0.00</td><td>$200.00</td><td>$1,700.00</td></tr>
          </tbody>
        </table></div>
        <div class="foot"><output>8</output><output class="f-disc">$150.00</output><output>$200.00</output><output>$9,800.00</output></div>
      </div>
      <div class="splitter"><span></span></div>
      <div class="tabs low" role="tablist">
        <button role="tab" class="on w81"><svg class="i"><use href="#itin"/></svg>Itinerary</button>
        <button role="tab" class="w64"><svg class="i"><use href="#table"/></svg>Setup</button>
        <button role="tab" class="w75"><svg class="i"><use href="#person"/></svg>Staffing</button>
        <button role="tab" class="w78"><svg class="i"><use href="#fork"/></svg>Catering</button>
        <button role="tab" class="w88"><svg class="i"><use href="#glass"/></svg>Beverages</button>
        <button role="tab" class="w81"><svg class="i"><use href="#box"/></svg>Packages</button>
        <button role="tab" class="w64"><svg class="i"><use href="#notes"/></svg>Notes</button>
        <button role="tab" class="w90"><svg class="i"><use href="#floor"/></svg>Floor Plans</button>
        <button role="tab" class="w72"><svg class="i"><use href="#image"/></svg>Images</button>
      </div>
      <div class="panel p3">
        <div class="toolbar">
          <button aria-label="New"><svg class="i"><use href="#page"/></svg></button><button class="drop" aria-label="New options"><span class="caret"></span></button>
          <button aria-label="Clone"><svg class="i"><use href="#cubes"/></svg></button><button class="drop" aria-label="Clone options"><span class="caret"></span></button>
          <hr><button aria-label="Move"><svg class="i"><use href="#move"/></svg></button><button aria-label="Add resources"><svg class="i"><use href="#resadd"/></svg></button><button aria-label="Copy resources"><svg class="i"><use href="#rescopy"/></svg></button><button aria-label="Move resources"><svg class="i"><use href="#resmove"/></svg></button><button aria-label="Delete"><svg class="i"><use href="#cross"/></svg></button>
          <hr><button aria-label="Open related record" disabled><svg class="i"><use href="#openrel"/></svg></button>
          <hr><button aria-label="Views"><svg class="i"><use href="#views"/></svg></button><button class="drop slim" aria-label="View options"><span class="caret"></span></button>
          <button aria-label="Audit log"><svg class="i"><use href="#log"/></svg></button>
          <hr><button aria-label="Filters"><svg class="i"><use href="#funnel"/></svg></button><button class="drop slim" aria-label="Filter options"><span class="caret"></span></button>
          <hr><button aria-label="Up"><svg class="i"><use href="#up"/></svg></button><button aria-label="Down"><svg class="i"><use href="#down"/></svg></button>
          <hr><button aria-label="Reports"><svg class="i"><use href="#clip"/></svg></button>
          <hr><button aria-label="Print preview"><svg class="i"><use href="#preview"/></svg></button>
          <hr><button aria-label="Export"><svg class="i"><use href="#export"/></svg></button><button class="drop" aria-label="Export options"><span class="caret"></span></button>
          <span class="spring"></span><hr>
          <div class="search"><input placeholder="Text to search..." aria-label="Text to search itinerary"><button>Search</button></div>
        </div>
        <div class="grid g2">
          <div class="rows"><table>
            <colgroup><col class="c-ind"><col class="c-type"><col class="c-func"><col class="c-ftype"><col><col class="c-start"><col class="c-end"><col class="c-bar"></colgroup>
            <thead><tr><th></th><th>Itinerary Type</th><th>Function</th><th>Function Type</th><th>Description</th><th>Start Time<i></i></th><th>End Time<i></i></th><th></th></tr></thead>
            <tbody>
            <tr class="first"><td><span class="tri"></span></td><td>Function</td><td>Court Rules - Changes</td><td>Education Session</td><td class="k-green">Court Rules - Changes</td><td>9:30 AM</td><td>10:30 AM</td><td class="bar" rowspan="6"><div class="scroll"><span class="caret up gray"></span><span class="thumb"></span><span class="caret gray"></span></div></td></tr>
            <tr><td></td><td>Function</td><td>Family Law &amp; Custody Updates</td><td>Education Session</td><td class="k-green">Family Law &amp; Custody Updates</td><td>10:30 AM</td><td>11:30 AM</td></tr>
            <tr><td></td><td>Function</td><td>Lunch</td><td>Meal</td><td class="k-pink">Lunch</td><td>11:30 AM</td><td>1:00 PM</td></tr>
            <tr><td></td><td>Function</td><td>Criminal Proceedings</td><td>Education Session</td><td class="k-green">Criminal Proceedings</td><td>1:30 PM</td><td>2:30 PM</td></tr>
            <tr><td></td><td>Function</td><td>Coffee Break</td><td>Break</td><td class="k-blue">Coffee Break</td><td>2:30 PM</td><td>3:00 PM</td></tr>
            <tr class="cut"><td></td><td></td><td></td><td></td><td class="k-green"></td><td></td><td></td></tr>
            </tbody>
          </table></div>
          <div class="foot"><output>6</output></div>
        </div>
      </div>
    </div></div>
  </div>
</div>
</main>
</div>

<footer class="status"><span>Client ID: PSI001000AK</span><span>Memory Usage: 219MB</span><span>Total Users: 1</span><span>Total Concurrent: 0</span><span>User: aliciag_001000</span>
<svg class="grip" viewBox="0 0 12 12"><path d="M1 11L11 1M5 11l6-6M9 11l2-2" stroke="#81838f" stroke-width="1.200"/></svg></footer>

<div class="menu" role="menu">
  <button class="on" role="menuitem"><svg class="i"><use href="#page"/></svg><span>New</span><kbd>Ctrl+N</kbd><b></b></button>
  <button role="menuitem"><svg class="i"><use href="#cubes"/></svg><span>Clone...</span><b></b></button>
  <hr>
  <button role="menuitem"><svg class="i"><use href="#pencil"/></svg><span>Location Update</span></button>
  <button role="menuitem"><svg class="i"><use href="#info"/></svg><span>Change Status</span><b></b></button>
  <button role="menuitem"><svg class="i"><use href="#resadd"/></svg><span>Add Resources</span></button>
  <button role="menuitem"><svg class="i"><use href="#rescopy"/></svg><span>Copy Resources</span></button>
  <button role="menuitem"><svg class="i"><use href="#resmove"/></svg><span>Move Resources</span></button>
  <button role="menuitem"><svg class="i"><use href="#itinadd"/></svg><span>Create Itinerary</span></button>
  <button role="menuitem"><svg class="i"><use href="#hand"/></svg><span>Set Best Rate</span></button>
  <button role="menuitem"><svg class="i"><use href="#tag"/></svg><span>Update Rate</span></button>
  <button role="menuitem"><svg class="i"><use href="#cross"/></svg><span>Delete</span><kbd>Ctrl+D</kbd></button>
  <hr>
  <button role="menuitem"><svg class="i"><use href="#clip"/></svg><span>Reports</span></button>
  <hr>
  <button role="menuitem" disabled><svg class="i"><use href="#openrel"/></svg><span>Open Related Record</span><kbd>Ctrl+Shift+O</kbd></button>
  <hr>
  <button role="menuitem"><svg class="i"><use href="#views"/></svg><span>Views</span><b></b></button>
  <button role="menuitem"><svg class="i"><use href="#log"/></svg><span>Audit Log</span></button>
  <hr>
  <button role="menuitem"><svg class="i"><use href="#funnel"/></svg><span>Filters</span><b></b></button>
  <hr>
  <button role="menuitem"><svg class="i"><use href="#export"/></svg><span>Export to</span><b></b></button>
  <hr>
  <button role="menuitem"><svg class="i"><use href="#preview"/></svg><span>Print Preview...</span></button>
  <hr>
  <button role="menuitem"><svg class="i"><use href="#copycell"/></svg><span>Copy Cell Value</span><kbd>Ctrl+Shift+C</kbd></button>
  <button role="menuitem"><span class="i"></span><span>Show Toolbar</span></button>
  <hr>
  <div class="search"><input placeholder="Text to search..." aria-label="Search from menu"><button>Search</button></div>
</div>
<div class="menu submenu" role="menu"><button class="on" role="menuitem"><svg class="i"><use href="#evloc"/></svg><span>Event Location</span></button></div>
</div>
</body>
</html>
```
FILE: styles.css
```css
:root {
  --ink: #20203c;
  --line: #9c9eab;
  --soft: #d0d2d9;
  --face: #ebecef;
  --ui: "DejaVu Sans Condensed", "DejaVu Sans", sans-serif;
}
* { box-sizing: border-box; }
body { margin: 0; font: 11px/13px var(--ui); color: var(--ink); background: #fff; }
button, input { font: inherit; color: inherit; margin: 0; padding: 0; border: 0; background: none; border-radius: 0; min-width: 0; }
button { white-space: nowrap; }
a { color: inherit; text-decoration: none; }
p, h1, h2, h3 { margin: 0; font: inherit; }
.sprite { position: absolute; width: 0; height: 0; }
.i { width: 16px; height: 16px; flex: none; display: block; }
.spring { flex: 1; }
.caret { display: inline-block; border: 3px solid transparent; border-top: 4px solid var(--ink); border-bottom: 0; vertical-align: middle; }
.caret.gray { border-top-color: #777a88; }
.caret.up { border-top: 0; border-bottom: 4px solid #777a88; }

.window { position: relative; display: flex; flex-direction: column; height: 100vh; min-height: 800px; padding: 0 4px 3px; border: 1px solid #9294a1; border-radius: 6px 6px 4px 4px; background: linear-gradient(#dcdde1, #c6c7ce 36px); }

.titlebar { display: grid; grid-template-columns: 1fr auto 1fr; align-items: center; height: 26px; }
.titlebar h1 { font-weight: 700; color: #5d5e70; }
.orb { position: absolute; left: 6px; top: 5px; width: 38px; height: 38px; }
.orb svg { width: 38px; height: 38px; display: block; }
.quick { display: flex; padding-left: 50px; }
.quick button { width: 28px; display: flex; justify-content: center; align-items: center; }
.quick .quick-caret { width: 21px; }
.quick .quick-more { width: 44px; }
.quick-more .caret { position: relative; }
.quick-more .caret::before { content: ""; position: absolute; left: -3px; top: -7px; width: 7px; height: 1px; background: var(--ink); }
.winbtns { display: flex; justify-content: flex-end; gap: 2px; }
.winbtns button { width: 29px; height: 15px; border: 1px solid #9fa1ad; border-radius: 3px; background: linear-gradient(#e4e5e9, #cfd0d6); display: flex; align-items: center; justify-content: center; }
.winbtns svg { width: 12px; height: 10px; fill: #777a88; }

.ribbon-tabs { display: flex; height: 22px; padding-left: 46px; color: #55566a; }
.ribbon-tabs button { width: 50px; }
.ribbon-tabs .on { width: 48px; color: var(--ink); background: #fff; border: 1px solid var(--line); border-bottom: 0; border-radius: 3px 3px 0 0; margin-bottom: -1px; position: relative; z-index: 1; }
.ribbon-tabs .collapse { margin-left: auto; width: 28px; display: flex; align-items: center; justify-content: center; }
.collapse svg { width: 14px; height: 11px; }
.ribbon { display: flex; height: 91px; flex: none; border: 1px solid var(--line); border-bottom: 2px solid #a9abb6; background: linear-gradient(#fff 40%, #f0f1f4); }
.rgroup { display: flex; flex-direction: column; border-right: 1px solid #b3b5bf; box-shadow: inset 1px 0 #fff; text-align: center; }
.rbody { display: flex; justify-content: center; height: 71px; }
.rgroup p { flex: 1; margin: 0 4px; padding-top: 3px; color: #9294a3; border-top: 1px solid #e0e1e6; }
.g-close { width: 50px; } .g-objects { width: 102px; } .g-actions { width: 663px; } .g-open { width: 86px; } .g-view { width: 159px; } .g-records { width: 222px; } .g-reports { width: 59px; }
.g-close .rbody, .g-objects .rbody, .g-open .rbody, .g-reports .rbody { padding-right: 3px; }
.g-view .rbody { padding-right: 4px; }
.g-actions .rbody { padding: 0 7px 0 2px; }
.big { display: block; padding-top: 4px; align-self: flex-start; line-height: 13px; }
.big svg { display: block; width: 32px; height: 32px; margin: 0 auto 5px; }
.big:disabled { color: #a5a6b1; }
.b42 { width: 42px; } .b44 { width: 44px; } .b46 { width: 46px; } .b48 { width: 48px; } .b50 { width: 50px; } .b52 { width: 52px; } .b60 { width: 60px; } .b66 { width: 66px; } .b72 { width: 72px; }
.smalls { flex: 1; padding: 1px 0 0 9px; }
.smalls button { display: flex; align-items: center; gap: 5px; height: 23px; }

.work { flex: 1; min-height: 0; display: flex; gap: 5px; padding: 5px 3px 3px 2px; background: var(--face); }
.nav { width: 129px; flex: none; display: flex; flex-direction: column; border: 1px solid var(--line); box-shadow: inset 0 0 0 1px #fff, 1px 1px 2px #c4c5cc; padding: 1px; }
.nav-head { display: flex; align-items: center; height: 19px; padding-left: 4px; color: #9a9cab; background: linear-gradient(#e6e7ea, #dcdde1); }
.nav-head b { flex: 1; }
.nav-head button { width: 24px; display: flex; justify-content: center; }
.nav-head svg { width: 12px; height: 12px; }
.nav h2 { margin: 0 8px 0 6px; height: 33px; padding: 11px 0 0 3px; border-bottom: 4px double #d2d3d9; background: linear-gradient(90deg, #f7f7f8, #ebecef); }
.nav-links a, .nav-groups a { display: flex; align-items: center; gap: 5px; height: 30px; padding-left: 9px; white-space: nowrap; }
.nav-links .lit { background: linear-gradient(90deg, #ebecef, #f8f8f9, #ebecef); border-bottom: 1px solid #d6d7dd; }
.nav-groups { margin-top: auto; padding: 4px 2px 2px; border-top: 4px double #d2d3d9; }
.nav-groups a { padding-left: 8px; border: 1px solid transparent; height: 28px; margin: 1px 0 2px; }
.nav-groups .on { background: #d5d6dc; border-color: #a5a7b2; border-radius: 2px; }
.nav-groups a:last-child { margin-bottom: 0; }
.nav-foot { display: flex; align-items: center; height: 34px; padding-left: 12px; border-top: 1px solid #c9cad1; }
.nav-foot button { width: 28px; display: flex; justify-content: center; }

main { flex: 1; min-width: 0; display: flex; flex-direction: column; }
.doc-tabs { display: flex; justify-content: space-between; align-items: center; height: 25px; padding: 0 10px 0 2px; }
.doc-tabs .on { align-self: flex-end; display: flex; align-items: center; gap: 3px; height: 25px; padding: 0 9px; border: 1px solid var(--line); border-bottom: 0; background: var(--face); margin-bottom: -1px; position: relative; }
.doc { flex: 1; min-height: 0; display: flex; flex-direction: column; padding: 10px 9px 4px 4px; border: 1px solid var(--line); background: var(--face); }
.group { margin-left: 5px; height: 88px; flex: none; border: 1px solid #c3c5cd; border-radius: 3px; }
.group h3 { display: flex; align-items: center; gap: 4px; height: 24px; padding-left: 12px; background: linear-gradient(#e9eaed, #dfe0e4); border-bottom: 1px solid #d3d4da; }
.fields { display: grid; grid-template-columns: 44px 60px 116px 185fr 91px 196fr 95px 199fr 68px 179fr; gap: 2px 0; padding: 10px 10px 0 9px; }
.fields label { padding: 4px 0 0 9px; white-space: nowrap; }
.fields label:first-child { padding-left: 0; }
.fields .name { grid-column: 4; }
.fields input { height: 20px; padding: 0 3px; border: 1px solid #c6c8d0; border-top-color: var(--line); background: #f5f5f7; color: #10101e; }
.fields .orange { background: #ffa500; } .fields .lime { background: #e0ff80; } .fields .violet { background: #e4caff; } .fields .green { background: #32cd32; }

.tabs { display: flex; align-items: flex-end; height: 25px; flex: none; padding-left: 3px; }
.doc > .tabs { margin-top: 6px; }
.tabs button { display: flex; align-items: center; gap: 2px; height: 23px; padding-left: 8px; border: 1px solid var(--line); border-bottom: 0; background: linear-gradient(#d9dadf, #e8e9ec); color: #45465c; box-shadow: inset 1px 1px #f3f3f5; }
.tabs .on { height: 26px; margin-bottom: -1px; background: #fff; color: var(--ink); position: relative; box-shadow: none; }
.tabs .end { justify-content: flex-end; padding-right: 8px; }
.tabs.low { height: 26px; padding-left: 8px; }
.w64 { width: 64px; } .w68 { width: 68px; } .w72 { width: 72px; } .w75 { width: 75px; } .w78 { width: 78px; } .w81 { width: 81px; } .w88 { width: 88px; } .w90 { width: 90px; } .w97 { width: 97px; } .w101 { width: 101px; } .w114 { width: 114px; } .w117 { width: 117px; } .w250 { width: 250px; } .w260 { width: 260px; }
.panel { display: flex; flex-direction: column; border: 1px solid var(--line); background: #fff; min-height: 0; box-shadow: 1px 1px 2px #c9cad1; }
.p1 { flex: 1; padding: 5px 9px 4px 5px; }
.p2 { flex: 1; padding: 2px; }
.frame { flex: 1; min-height: 0; display: flex; flex-direction: column; border: 1px solid #c9cbd3; border-radius: 3px; background: var(--face); padding: 0 0 4px 1px; }
.p3 { margin: 0 9px 0 5px; padding: 1px; flex: none; }

.toolbar { display: flex; align-items: center; height: 28px; flex: none; padding: 0 4px 0 0; border-bottom: 1px solid #b9bbc5; border-radius: 2px; background: linear-gradient(#fff 40%, #eeeff2); }
.toolbar > button, .run button { width: 26px; height: 24px; display: flex; align-items: center; justify-content: center; }
.toolbar .drop { width: 11px; }
.toolbar .slim { width: 7px; padding-right: 5px; }
.toolbar hr { width: 1px; height: 18px; margin: 0 3px; border: 0; background: linear-gradient(transparent, #c2c4cc, transparent); }
.run { width: 278px; }
.p3 .toolbar { height: 30px; padding: 0 7px 0 3px; }
.search { display: flex; width: 150px; height: 21px; margin-left: 4px; border: 1px solid #c3c5cd; border-top-color: var(--line); background: #fff; }
.search input { flex: 1; padding-left: 4px; }
.search input::placeholder { color: #9da0ad; opacity: 1; }
.search button { padding-right: 4px; }

.grid { display: flex; flex-direction: column; border: 1px solid var(--line); margin-top: 3px; background: #fff; min-height: 0; }
.g1 { flex: 1; }
.g2 { height: 158px; margin: 3px; }
.rows { flex: 1; min-height: 0; overflow: hidden; }
table { width: 100%; table-layout: fixed; border-collapse: separate; border-spacing: 0; }
th, td { padding: 0 3px; border-right: 1px solid var(--soft); border-bottom: 1px solid var(--soft); white-space: nowrap; overflow: hidden; text-align: left; font-weight: 400; }
th { height: 20px; background: linear-gradient(#f9f9fa, #eeeff1); position: relative; }
th i { position: absolute; right: 15px; top: 7px; border: 4px solid transparent; border-top: 0; border-bottom: 4px solid var(--ink); }
td { height: 21px; }
tbody tr { background: #f1f5fa; }
tbody tr:nth-child(odd) { background: #f7f3fe; }
td:first-child, th:first-child { padding: 0 5px; background: #f2f3f6; }
.tri { display: block; width: 0; border: 4px solid transparent; border-left: 4px solid var(--ink); border-right: 0; }
.c-ind { width: 16px; } .c-stat { width: 104px; } .c-room { width: 173px; } .c-name { width: 117px; } .c-from { width: 175px; } .c-to { width: 160px; } .c-att { width: 81px; } .c-setup { width: 99px; } .c-chg { width: 64px; } .c-disc { width: 60px; } .c-sur { width: 68px; }
.c-type { width: 134px; } .c-func { width: 226px; } .c-ftype { width: 202px; } .c-start { width: 118px; } .c-end { width: 125px; } .c-bar { width: 17px; }
.g1 td:nth-child(2) { background: #e0ff80; color: #10101e; }
.g1 td:nth-child(7), .g1 td:nth-child(n+9) { text-align: right; }
.g1 tr > :last-child, .g2 th:last-child { border-right: 0; }
.g1 .focus { background: #dfe8fb; }
.g1 .focus td { height: 20px; }
.g1 .focus td:not(:first-child) { border-top: 1px dotted var(--ink); border-bottom: 1px dotted var(--ink); }
.g1 .focus td:nth-child(4) { background: #fff; }
.g2 th { height: 19px; }
.g2 .first { background: #eeeff1; }
.k-green { background: #adff2f; color: #10101e; } .k-pink { background: #ffc0cb; color: #10101e; } .k-blue { background: #87cefa; color: #10101e; }
.g2 .bar { padding: 0; background: #f3f3f6; border: 0; vertical-align: top; }
.g2 .cut td { height: 2px; }
.scroll { display: flex; flex-direction: column; align-items: center; height: 105px; padding: 7px 0 5px; }
.thumb { width: 8px; height: 51px; margin: 6px 0 auto; border: 1px solid #a3a5b1; border-radius: 4px; background: linear-gradient(90deg, #f0f0f3, #d3d4da); }
.foot { display: flex; justify-content: flex-end; gap: 2px; height: 30px; flex: none; padding: 2px 2px 3px 17px; border-top: 1px solid #c6c8d0; background: linear-gradient(#eaebee, #dfe0e4); }
.foot output { border: 1px solid #cfd1d8; background: #fff; text-align: right; padding: 6px 4px 0; }
.g1 output:first-child { width: 102px; margin-right: auto; }
.g1 .f-disc { width: 59px; }
.g1 output:nth-child(3) { width: 66px; }
.g1 output:nth-child(4) { width: 112px; }
.g2 .foot { padding-left: 579px; padding-right: 261px; }
.g2 output { flex: 1; }
.splitter { height: 10px; flex: none; display: flex; justify-content: center; padding-top: 2px; }
.splitter span { width: 14px; height: 3px; background: repeating-linear-gradient(90deg, #8d8f9b 0 1px, transparent 1px 2px); }

.status { display: flex; align-items: center; gap: 10px; height: 27px; flex: none; padding: 0 3px 2px 7px; border-top: 1px solid #c2c4cb; background: linear-gradient(#dcdde1, #c6c7ce); }
.grip { width: 12px; height: 12px; margin-left: auto; align-self: flex-end; }

.menu { position: absolute; left: 251px; top: 42px; width: 262px; padding: 1px; border: 1px solid var(--line); background: #fff; font: 12px/16px "Open Sans", "Noto Sans", sans-serif; }
.menu > button { display: flex; align-items: center; width: 100%; height: 24px; padding-left: 4px; border: 1px solid transparent; text-align: left; }
.menu > button > span:not(.i) { flex: 1; padding-left: 11px; }
.menu .on { border-color: #a9afc8; background: linear-gradient(#e6ecff, #cfdbfb); border-radius: 1px; box-shadow: inset 0 0 0 1px #eef2ff; }
.menu button:disabled { color: #a2a3ae; }
.menu kbd { font: inherit; margin-right: 24px; }
.menu b { width: 15px; height: 16px; display: flex; align-items: center; }
.menu b::after { content: ""; border: 4px solid transparent; border-left: 5px solid var(--ink); border-right: 0; margin-left: 1px; }
.menu kbd + b { margin-left: -23px; padding-left: 7px; width: 23px; border-left: 1px solid #c3c9dc; }
.menu > hr { height: 1px; margin: 1px 4px 1px 34px; border: 0; background: linear-gradient(90deg, #d2d3da 70%, #f3f3f5); }
.menu .search { width: auto; height: 20px; margin: 4px 3px 3px 38px; font: 11px/13px var(--ui); }
.submenu { left: 513px; top: 44px; width: 141px; }
.submenu > button { padding-left: 3px; }
```
